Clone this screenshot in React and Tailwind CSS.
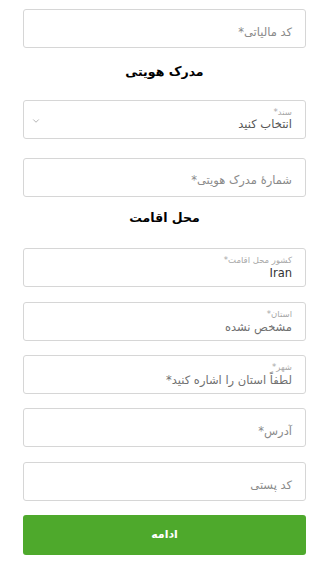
import { ChevronDown } from "lucide-react";

const font = { fontFamily: '"DejaVu Sans", sans-serif' };

const PlainField = ({ placeholder }) => (
  <div className="h-[39px] border border-[#d6d6d6] rounded-[3px] bg-white flex items-end pb-[9px] pr-[13px] pl-[11px]">
    <span className="text-[11.5px] text-[#8a8a8a] leading-none">{placeholder}</span>
  </div>
);

const LabelField = ({ label, value, dark }) => (
  <div className="h-[39px] border border-[#d6d6d6] rounded-[3px] bg-white flex flex-col justify-center pr-[13px] pl-[11px] gap-[3px]">
    <span className="text-[8.5px] text-[#a8a8a8] leading-none">{label}</span>
    <span className={`text-[11.5px] leading-none ${dark ? "text-[#333]" : "text-[#707070]"}`}>
      {value}
    </span>
  </div>
);

const Title = ({ children }) => (
  <h2 className="text-center text-[12.5px] font-bold text-black leading-none">{children}</h2>
);

export default function App() {
  return (
    <div className="w-[334px] h-[570px] bg-white pl-[23px] pt-[9px]" style={font}>
      <div dir="rtl" className="w-[283px] flex flex-col">
        <PlainField placeholder="کد مالیاتی*" />

        <div className="mt-[18px] mb-[21px]">
          <Title>مدرک هویتی</Title>
        </div>

        {/* select */}
        <div className="relative h-[39px] border border-[#d6d6d6] rounded-[3px] bg-white flex flex-col justify-center pr-[13px] pl-[11px] gap-[3px]">
          <span className="text-[8.5px] text-[#a8a8a8] leading-none">سند*</span>
          <span className="text-[11.5px] text-[#555] leading-none">انتخاب کنید</span>
          <ChevronDown className="absolute left-[7px] top-[15px] w-[10px] h-[10px] text-[#888]" strokeWidth={1.5} />
        </div>

        <div className="mt-[19px]">
          <PlainField placeholder="شمارهٔ مدرک هویتی*" />
        </div>

        <div className="mt-[15px] mb-[24px]">
          <Title>محل اقامت</Title>
        </div>

        <LabelField label="کشور محل اقامت*" value="Iran" dark />
        <div className="mt-[15px]">
          <LabelField label="استان*" value="مشخص نشده" />
        </div>
        <div className="mt-[14px]">
          <LabelField label="شهر*" value="لطفاً استان را اشاره کنید*" />
        </div>
        <div className="mt-[14px]">
          <PlainField placeholder="آدرس*" />
        </div>
        <div className="mt-[15px]">
          <PlainField placeholder="کد پستی" />
        </div>

        <button className="mt-[14px] h-[40px] rounded-[3px] bg-[#4ea92c] text-white text-[11px] font-bold">
          ادامه
        </button>
      </div>
    </div>
  );
}
